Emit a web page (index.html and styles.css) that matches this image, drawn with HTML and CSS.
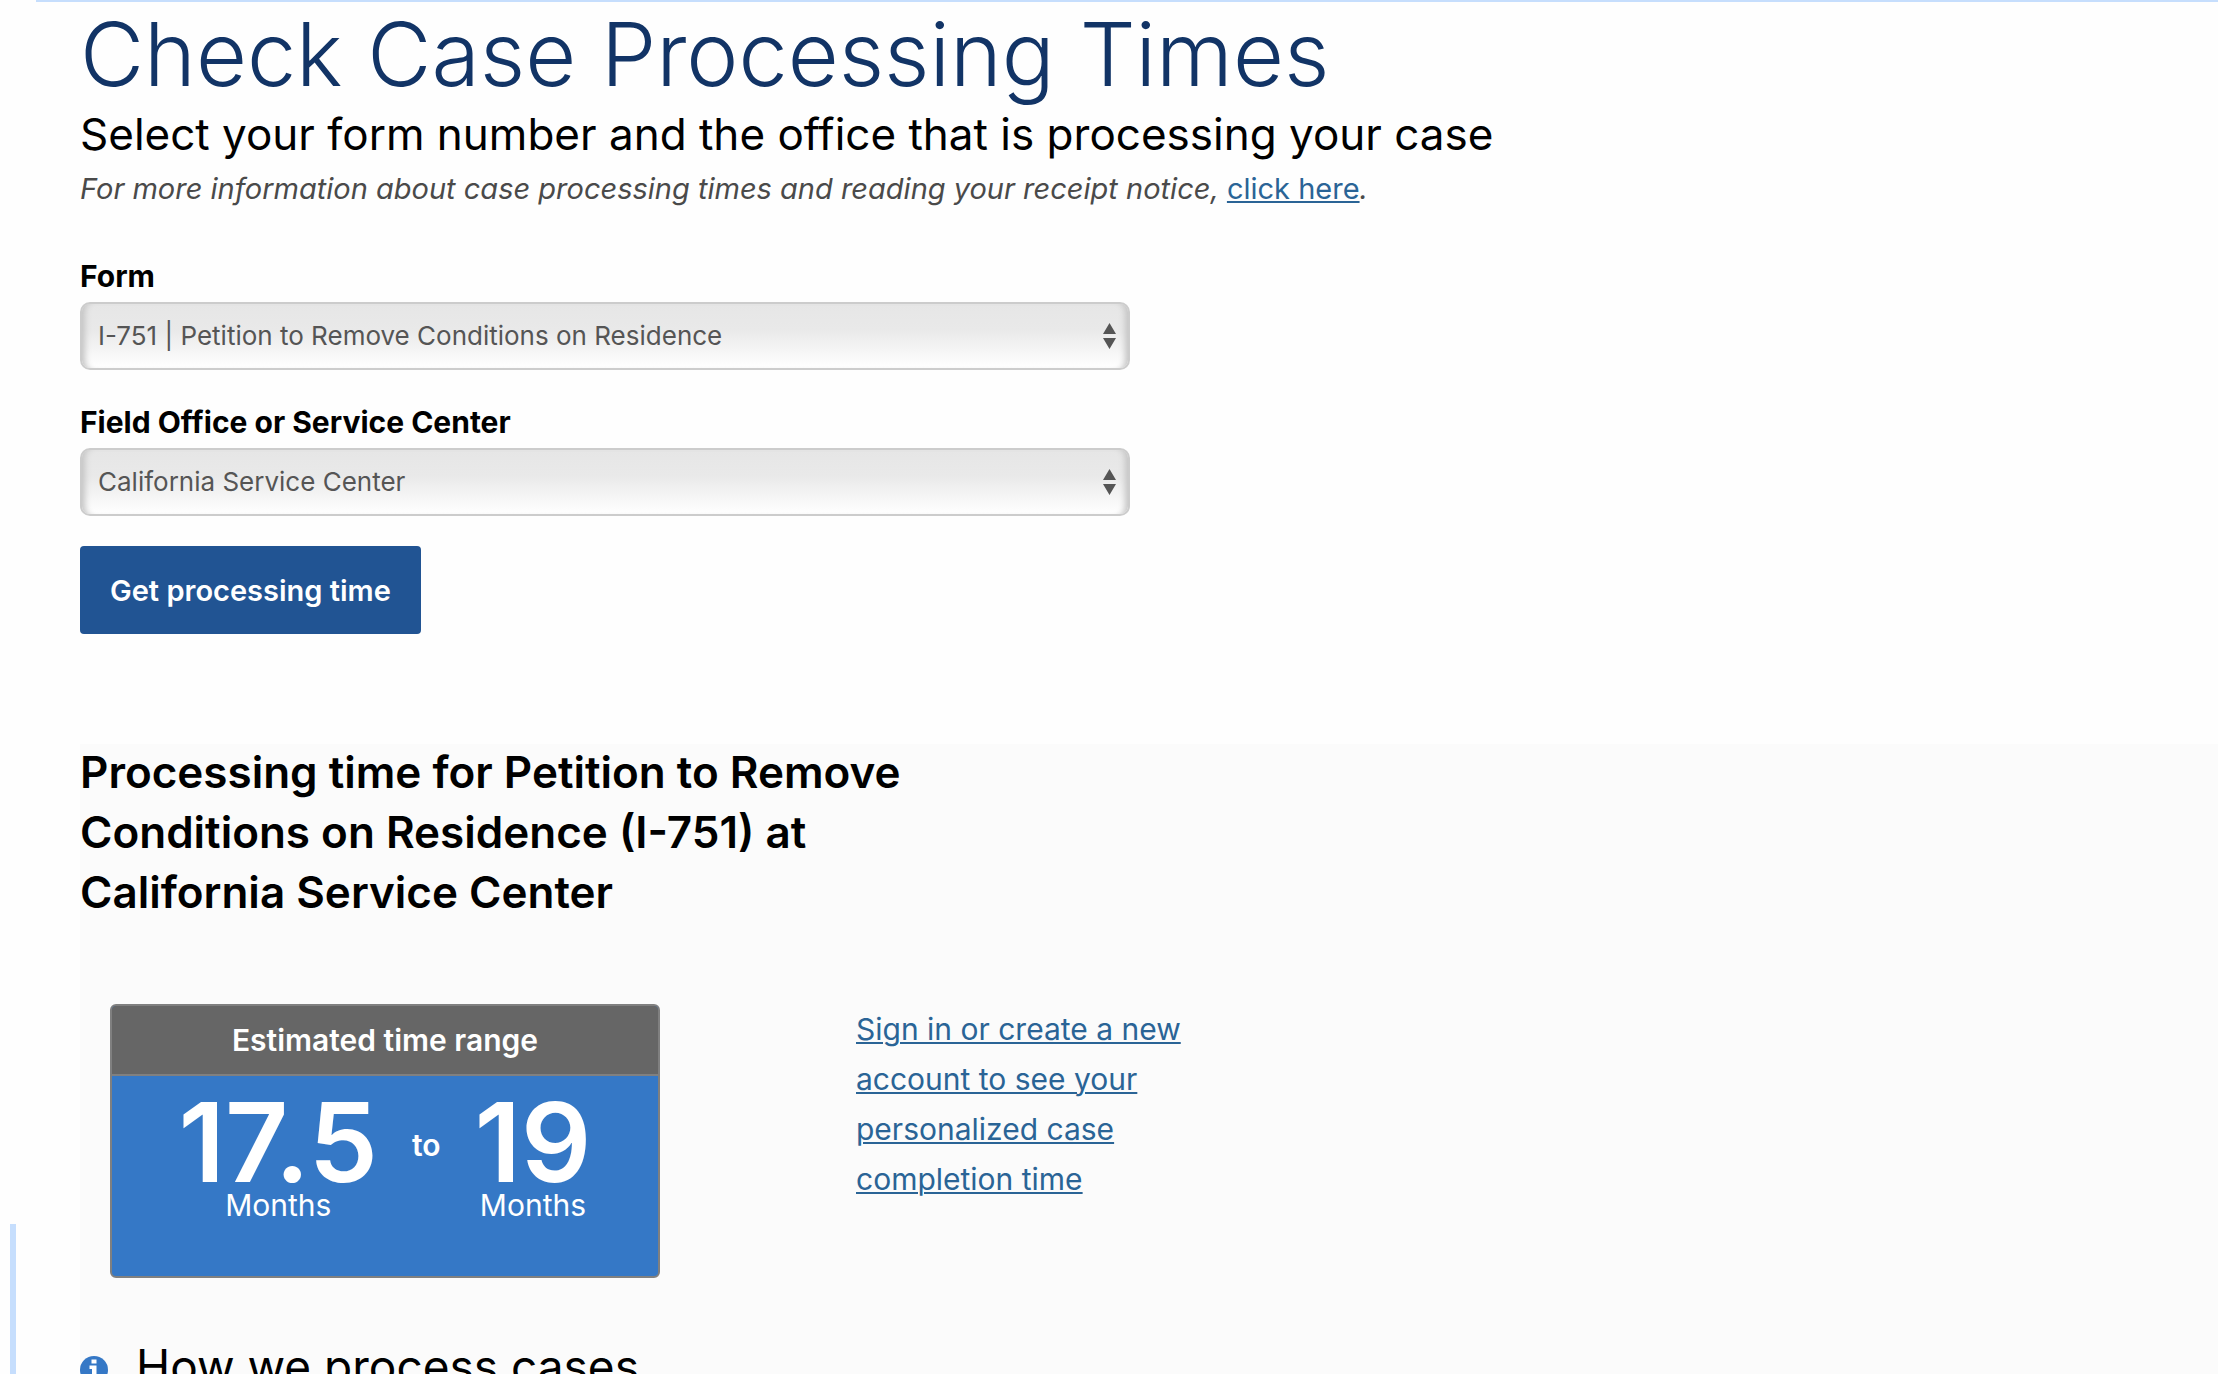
FILE: index.html
```html
<!DOCTYPE html>
<html lang="en">
<head>
  <meta charset="UTF-8">
  <meta name="viewport" content="width=device-width, initial-scale=1.0">
  <title>Check Case Processing Times</title>
  <link rel="stylesheet" href="styles.css">
</head>
<body>
  <div class="page">
    <div class="side">
      <div class="side-bar"></div>
    </div>

    <main class="content">
      <h1>Check Case Processing Times</h1>
      <h2 class="subtitle">Select your form number and the office that is processing your case</h2>
      <p class="note"><em>For more information about case processing times and reading your receipt notice,</em> <a href="#">click here</a><em>.</em></p>

      <form class="case-form">
        <div class="field">
          <label for="formNumber">Form</label>
          <div class="select-wrap">
            <select id="formNumber">
              <option>I-751 | Petition to Remove Conditions on Residence</option>
            </select>
            <svg class="arrows" viewBox="0 0 13 26" aria-hidden="true">
              <path d="M6.5 0L13 11H0z M0 15h13L6.5 26z"/>
            </svg>
          </div>
        </div>

        <div class="field">
          <label for="office">Field Office or Service Center</label>
          <div class="select-wrap">
            <select id="office">
              <option>California Service Center</option>
            </select>
            <svg class="arrows" viewBox="0 0 13 26" aria-hidden="true">
              <path d="M6.5 0L13 11H0z M0 15h13L6.5 26z"/>
            </svg>
          </div>
        </div>

        <button type="button" class="submit">Get processing time</button>
      </form>

      <section class="results">
        <h2 class="results-title">Processing time for Petition to Remove Conditions on Residence (I-751) at California Service Center</h2>

        <div class="results-row">
          <div class="range-card">
            <div class="range-header">Estimated time range</div>
            <div class="range-body">
              <div class="range-value">
                <span class="number">17.5</span>
                <span class="unit">Months</span>
              </div>
              <span class="range-to">to</span>
              <div class="range-value">
                <span class="number">19</span>
                <span class="unit">Months</span>
              </div>
            </div>
          </div>
          <p class="account-link"><a href="#">Sign in or create a new account to see your personalized case completion time</a></p>
        </div>

        <div class="how">
          <svg class="info" viewBox="0 0 28 28" aria-hidden="true">
            <circle cx="14" cy="14" r="14" fill="#3578c6"/>
            <path fill="#fff" d="M11.5 3.5h5v4h-5z M9.5 9.5h7v10h2v3.500h-9v-3.500h2.500v-6.500h-2.500z"/>
          </svg>
          <h2>How we process cases</h2>
        </div>
      </section>
    </main>
  </div>
</body>
</html>
```
FILE: styles.css
```css
:root {
  --navy: #123466;
  --button: #215493;
  --blue: #3578c6;
  --link: #2a6496;
  --line: #c6defd;
}

* {
  box-sizing: border-box;
  margin: 0;
  padding: 0;
}

body {
  background: #fefefe;
  color: #000;
  font-family: Inter, "Open Sans", sans-serif;
  font-size: 30px;
}

a {
  color: var(--link);
  text-decoration: underline;
  text-decoration-thickness: 2px;
  text-underline-offset: 2px;
}

.page {
  display: flex;
  height: 100vh;
  overflow: hidden;
}

.side {
  display: flex;
  flex: 0 0 36px;
  align-items: flex-end;
  padding-left: 10px;
}

.side-bar {
  width: 6px;
  height: 150px;
  background: var(--line);
}

.content {
  flex: 1;
  padding-left: 44px;
  border-top: 2px solid var(--line);
}

h1 {
  color: var(--navy);
  font-size: 88px;
  font-weight: 300;
  line-height: 104px;
}

.subtitle {
  font-size: 44px;
  font-weight: 400;
  line-height: 56px;
}

.note {
  color: #4a4a4a;
  font-size: 29px;
  line-height: 54px;
}

/* Form */
.case-form {
  width: 1050px;
  max-width: 100%;
  margin-top: 42px;
}

.field {
  margin-bottom: 34px;
}

.field label {
  display: block;
  margin-bottom: 8px;
  font-weight: 700;
  line-height: 36px;
}

.select-wrap {
  position: relative;
}

.select-wrap select {
  display: block;
  width: 100%;
  height: 68px;
  padding: 0 48px 2px 16px;
  appearance: none;
  border: 2px solid #ccc;
  border-radius: 10px;
  background: linear-gradient(#e6e6e6, #e9e9e9 40%, #fff);
  box-shadow: inset 8px 0 6px -5px #c4c4c4, inset -8px 0 6px -5px #c4c4c4;
  color: #555;
  font-family: inherit;
  font-size: 26px;
}

.arrows {
  position: absolute;
  top: 21px;
  right: 14px;
  width: 13px;
  height: 26px;
  fill: #555;
  pointer-events: none;
}

.submit {
  height: 88px;
  padding: 0 30px;
  border: none;
  border-radius: 4px;
  background: var(--button);
  color: #fff;
  font-family: inherit;
  font-size: 29px;
  font-weight: 600;
  cursor: pointer;
}

.case-form .field:nth-child(2) {
  margin-bottom: 30px;
}

/* Results */
.results {
  display: flow-root;
  height: 800px;
  margin-top: 110px;
  background: #fbfbfb;
}

.results-title {
  width: 860px;
  margin-top: -2px;
  font-size: 44px;
  font-weight: 600;
  line-height: 60px;
}

.results-row {
  display: flex;
  gap: 196px;
  margin-top: 82px;
  padding-left: 30px;
}

.range-card {
  width: 550px;
  height: 274px;
  overflow: hidden;
  border: 2px solid #808080;
  border-radius: 6px;
  background: var(--blue);
  color: #fff;
}

.range-header {
  height: 70px;
  border-bottom: 2px solid #808080;
  background: #666;
  font-weight: 600;
  line-height: 68px;
  text-align: center;
}

.range-body {
  display: flex;
  justify-content: center;
  gap: 34px;
  padding-top: 18px;
}

.range-value {
  display: flex;
  flex-direction: column;
  align-items: center;
}

.number {
  font-size: 110px;
  font-weight: 600;
  line-height: 96px;
}

.unit {
  line-height: 30px;
}

.range-to {
  font-weight: 600;
  line-height: 102px;
}

.account-link {
  width: 340px;
  line-height: 50px;
}

.how {
  display: flex;
  gap: 28px;
  margin-top: 58px;
}

.how .info {
  width: 28px;
  height: 28px;
  margin-top: 20px;
}

.how h2 {
  font-size: 46px;
  font-weight: 400;
  line-height: 60px;
}
```
